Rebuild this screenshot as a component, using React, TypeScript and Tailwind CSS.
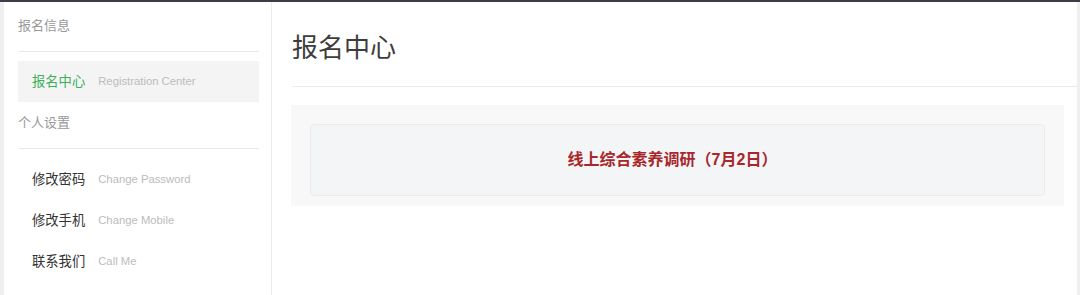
import React from "react";

const font = { fontFamily: '"Liberation Sans","Noto Sans CJK SC",sans-serif' };

function Item({ cn, en, active }: { cn: string; en: string; active?: boolean }) {
  return (
    <div
      className={`flex h-[41px] items-center pl-[14px] ${active ? "bg-[#f4f4f4]" : ""}`}
    >
      <span className={`text-[13.3px] ${active ? "text-[#3cae5c]" : "text-[#333333]"}`}>{cn}</span>
      <span className="ml-[13px] text-[11.3px] text-[#bcbcbc]">{en}</span>
    </div>
  );
}

export default function App() {
  return (
    <div
      className="flex h-[295px] w-[1080px] overflow-hidden border-t-2 border-[#3b3d4a] bg-[#efefef]"
      style={font}
    >
      <aside className="ml-[4px] w-[268px] shrink-0 border-r border-[#ececec] bg-white pl-[14px] pr-[12px] pt-[14px]">
        <div className="text-[13px] leading-[20px] text-[#999999]">报名信息</div>
        <div className="mt-[15px] h-px bg-[#e8e8e8]" />
        <div className="mt-[9px]">
          <Item cn="报名中心" en="Registration Center" active />
        </div>
        <div className="mt-[11px] text-[13px] leading-[20px] text-[#999999]">个人设置</div>
        <div className="mt-[15px] h-px bg-[#e8e8e8]" />
        <div className="mt-[10px]">
          <Item cn="修改密码" en="Change Password" />
          <Item cn="修改手机" en="Change Mobile" />
          <Item cn="联系我们" en="Call Me" />
        </div>
      </aside>
      <main className="mr-[3px] flex-1 bg-white pl-[20px] pt-[30px]">
        <h1 className="text-[26px] leading-[32px] text-[#3d3d3d]">报名中心</h1>
        <div className="mt-[22px] h-px bg-[#ececec]" />
        <div className="ml-[-1px] mt-[18px] w-[773px] bg-[#f8f8f9] px-[19px] pb-[10px] pt-[19px]">
          <div className="flex h-[72px] items-center justify-center rounded-[4px] border border-[#ebebed] bg-[#f4f5f7]">
            <span className="pr-[10px] text-[16px] font-bold text-[#a8272b]">线上综合素养调研（7月2日）</span>
          </div>
        </div>
      </main>
    </div>
  );
}
